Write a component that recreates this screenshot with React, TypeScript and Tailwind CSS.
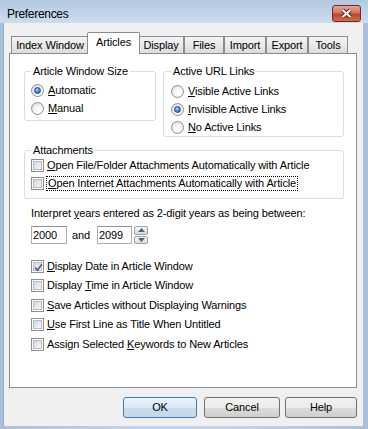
import React from 'react';

type Acc = { pre?: string; u: string; post: string };

function Text({ pre, u, post }: Acc) {
  return (
    <span className="whitespace-nowrap leading-[13px]">
      {pre}
      <u className="underline-offset-[1px]">{u}</u>
      {post}
    </span>
  );
}

function Radio({ checked }: { checked?: boolean }) {
  return (
    <span className="flex h-[13px] w-[13px] shrink-0 items-center justify-center rounded-full border border-[#8e8f8f] bg-[radial-gradient(circle_at_60%_65%,#ffffff_0%,#f4f4f4_45%,#d2d2d2_100%)]">
      {checked && (
        <span className="h-[7px] w-[7px] rounded-full border border-[#1c4a88] bg-[radial-gradient(circle_at_40%_35%,#b9dcfb_0%,#4d8fd9_45%,#1b5aa8_100%)]" />
      )}
    </span>
  );
}

function Check({ checked }: { checked?: boolean }) {
  return (
    <span className="relative flex h-[13px] w-[13px] shrink-0 border border-[#8e8f8f] bg-white p-px">
      <span className="h-full w-full border border-[#b8bcc2] bg-[linear-gradient(135deg,#d3d6db,#f8f8f8)]" />
      {checked && (
        <svg className="absolute left-px top-px" width="11" height="11" viewBox="0 0 11 11">
          <path d="M2.2 5.6 L4.4 8.2 L8.9 2.2" fill="none" stroke="#4a5f96" strokeWidth="1.7" />
        </svg>
      )}
    </span>
  );
}

function Tab({ label, w }: { label: string; w: string }) {
  return (
    <div
      className={`${w} flex h-[17px] items-center justify-center border-x border-t border-[#898c95] bg-[linear-gradient(#f5f5f5,#dcdcdc)] leading-[13px]`}
    >
      {label}
    </div>
  );
}

function Button({ label, w, primary }: { label: string; w: string; primary?: boolean }) {
  return (
    <div
      className={
        primary
          ? `${w} flex h-[21px] items-center justify-center rounded-[3px] border border-[#3c7fb1] bg-[linear-gradient(#eaf3fb_0%,#dbe9f5_50%,#c9ddee_51%,#c2d8ec_100%)] leading-[13px]`
          : `${w} flex h-[21px] items-center justify-center rounded-[3px] border border-[#707070] bg-[linear-gradient(#f2f2f2_0%,#ebebeb_50%,#dddddd_51%,#cfcfcf_100%)] leading-[13px]`
      }
    >
      {label}
    </div>
  );
}

export default function App() {
  const rows: { acc: Acc; checked?: boolean; h: string }[] = [
    { acc: { u: 'D', post: 'isplay Date in Article Window' }, checked: true, h: 'h-[20px]' },
    { acc: { pre: 'Display ', u: 'T', post: 'ime in Article Window' }, h: 'h-[19px]' },
    { acc: { u: 'S', post: 'ave Articles without Displaying Warnings' }, h: 'h-[20px]' },
    { acc: { u: 'U', post: 'se First Line as Title When Untitled' }, h: 'h-[19px]' },
    { acc: { pre: 'Assign Selected ', u: 'K', post: 'eywords to New Articles' }, h: 'h-[20px]' },
  ];

  return (
    <div className="flex h-[429px] w-[368px] flex-col bg-[linear-gradient(90deg,#a9c0dc,#c4d6ec_40%,#c4d6ec_60%,#a9c0dc)] font-['Liberation_Sans',Arial,sans-serif] text-[11px] tracking-[-0.12px] text-black">
      {/* title bar */}
      <div className="flex h-[23px] shrink-0 items-start justify-between bg-[linear-gradient(#b3c8e2,#cddcee)] pl-[7px] pr-[7px]">
        <span className="pt-[7px] text-[12px] leading-[14px] tracking-[-0.3px]">Preferences</span>
        <div className="mt-[5px] flex h-[17px] w-[29px] items-center justify-center rounded-[3px] border border-[#6b2a24] bg-[linear-gradient(#e6a89c_0%,#d2735f_45%,#bf4330_55%,#d06d4f_100%)]">
          <svg width="13" height="11" viewBox="0 0 13 11">
            <path d="M2.5 2 L10.5 9 M10.5 2 L2.5 9" stroke="#5a2019" strokeWidth="4" />
            <path d="M2.5 2 L10.5 9 M10.5 2 L2.5 9" stroke="#ffffff" strokeWidth="2.2" />
          </svg>
        </div>
      </div>

      {/* client area */}
      <div className="mb-[3px] ml-[3px] mr-[5px] flex flex-1 flex-col border-l border-[#8fa7c4] bg-[#f0f0f0] pb-[8px] pl-[5px] pr-[6px] pt-[9px]">
        <div className="relative z-10 flex h-[21px] items-end pl-[2px]">
          <Tab label="Index Window" w="w-[78px]" />
          <div className="relative z-10 -mx-[2px] -mb-px flex h-[22px] w-[53px] justify-center rounded-t-[2px] border-x border-t border-[#898c95] bg-white pt-[3px] leading-[13px]">
            Articles
          </div>
          <Tab label="Display" w="w-[46px]" />
          <Tab label="Files" w="w-[40px]" />
          <Tab label="Import" w="w-[42px]" />
          <Tab label="Export" w="w-[42px]" />
          <Tab label="Tools" w="w-[40px]" />
        </div>

        <div className="flex flex-1 flex-col border border-[#898c95] bg-white">
          <div className="mt-[11px] flex items-start gap-[7px] pl-[14px]">
            <fieldset className="h-[56px] w-[132px] rounded-[3px] border border-[#d5dfe5] pl-[6px] pt-[3px]">
              <legend className="px-[2px] leading-[13px]">Article Window Size</legend>
              <div className="flex h-[18px] items-center gap-[4px]">
                <Radio checked />
                <Text u="A" post="utomatic" />
              </div>
              <div className="flex h-[18px] items-center gap-[4px]">
                <Radio />
                <Text u="M" post="anual" />
              </div>
            </fieldset>
            <fieldset className="h-[72px] w-[181px] rounded-[3px] border border-[#d5dfe5] pl-[7px] pt-[4px]">
              <legend className="px-[2px] leading-[13px]">Active URL Links</legend>
              <div className="flex h-[18px] items-center gap-[4px]">
                <Radio />
                <Text u="V" post="isible Active Links" />
              </div>
              <div className="flex h-[18px] items-center gap-[4px]">
                <Radio checked />
                <Text u="I" post="nvisible Active Links" />
              </div>
              <div className="flex h-[18px] items-center gap-[4px]">
                <Radio />
                <Text u="N" post="o Active Links" />
              </div>
            </fieldset>
          </div>

          <fieldset className="ml-[14px] mt-[7px] h-[55px] w-[320px] rounded-[3px] border border-[#d5dfe5] pl-[6px]">
            <legend className="px-[2px] leading-[13px]">Attachments</legend>
            <div className="flex h-[17px] items-center gap-[3px]">
              <Check />
              <Text u="O" post="pen File/Folder Attachments Automatically with Article" />
            </div>
            <div className="flex h-[18px] items-center gap-[2px]">
              <Check />
              <span className="border border-dotted border-black px-px leading-[12px]">
                <Text u="O" post="pen Internet Attachments Automatically with Article" />
              </span>
            </div>
          </fieldset>

          <div className="flex flex-col pl-[21px]">
            <div className="mt-[8px] leading-[13px]">
              <Text pre="Interpret " u="y" post="ears entered as 2-digit years as being between:" />
            </div>
            <div className="mt-[6px] flex h-[18px] items-center">
              <div className="flex h-[18px] w-[36px] items-center border border-[#abadb3] border-t-[#8e9095] bg-white pl-px leading-[13px]">
                2000
              </div>
              <span className="ml-[5px] leading-[13px]">and</span>
              <div className="ml-[7px] flex h-[18px] w-[35px] items-center border border-[#abadb3] border-t-[#8e9095] bg-white pl-px leading-[13px]">
                2099
              </div>
              <div className="ml-[2px] flex h-[18px] w-[14px] flex-col gap-px">
                <div className="flex flex-1 items-center justify-center rounded-[2px] border border-[#a0a0a0] bg-[linear-gradient(#f7f7f7,#dcdcdc)]">
                  <svg width="7" height="4" viewBox="0 0 7 4">
                    <path d="M0 4 L3.5 0 L7 4 Z" fill="#4d6185" />
                  </svg>
                </div>
                <div className="flex flex-1 items-center justify-center rounded-[2px] border border-[#a0a0a0] bg-[linear-gradient(#f7f7f7,#dcdcdc)]">
                  <svg width="7" height="4" viewBox="0 0 7 4">
                    <path d="M0 0 L7 0 L3.5 4 Z" fill="#4d6185" />
                  </svg>
                </div>
              </div>
            </div>

            <div className="mt-[12px] flex flex-col">
              {rows.map((r, i) => (
                <div key={i} className={`${r.h} flex items-center gap-[3px]`}>
                  <Check checked={r.checked} />
                  <Text {...r.acc} />
                </div>
              ))}
            </div>
          </div>
        </div>

        <div className="mt-[9px] flex justify-end">
          <Button label="OK" w="w-[74px]" primary />
          <div className="ml-[7px]">
            <Button label="Cancel" w="w-[76px]" />
          </div>
          <div className="ml-[5px]">
            <Button label="Help" w="w-[72px]" />
          </div>
        </div>
      </div>
    </div>
  );
}
